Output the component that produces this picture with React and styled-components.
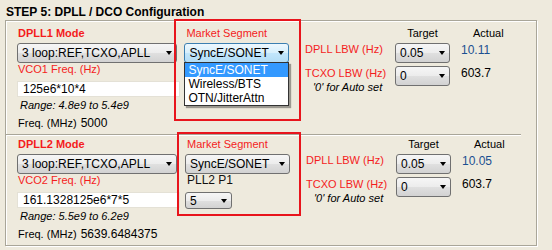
import React from 'react';
import styled, { createGlobalStyle } from 'styled-components';

const GlobalStyle = createGlobalStyle`
  html, body {
    margin: 0;
    padding: 0;
    background: #eeeadd;
  }
  body {
    font-family: "Liberation Sans", Arial, sans-serif;
    color: #000;
  }
`;

const Page = styled.div`
  width: 552px;
  height: 250px;
  box-sizing: border-box;
  padding: 5px 0 0 5px;
  overflow: hidden;
`;

const Title = styled.div`
  font-size: 12px;
  font-weight: bold;
  line-height: 14px;
  height: 14px;
  padding-left: 1px;
  margin-bottom: 1px;
`;

const Panel = styled.div`
  width: 532px;
  box-sizing: border-box;
  border: 1px solid #a9a699;
  box-shadow: 1px 1px 0 #fff, inset 1px 1px 0 #fff;
`;

const Section = styled.div`
  display: flex;
  padding: ${p => p.$top}px 0 4px 11px;
  margin-right: ${p => (p.$divider ? 15 : 0)}px;
  border-bottom: ${p => (p.$divider ? '1px solid #a9a699' : 'none')};
  box-shadow: ${p => (p.$divider ? '0 1px 0 #fff' : 'none')};
`;

const LeftCol = styled.div`
  width: 168px;
  display: flex;
  flex-direction: column;
`;

const MidCol = styled.div`
  position: relative;
  width: 121px;
  display: flex;
  flex-direction: column;
  align-items: flex-start;
`;

const RightGrid = styled.div`
  display: grid;
  grid-template-columns: 90px 66px 60px;
  grid-template-rows: 13px 20px auto;
  row-gap: 3px;
  align-items: start;
  & > :nth-child(n + 4) {
    margin-top: 0;
  }
`;

const ModeLabel = styled.div`
  color: #f41c1c;
  font-size: 11px;
  font-weight: bold;
  line-height: 13px;
  padding-left: 1px;
`;

const RedLabel = styled.div`
  color: #f41c1c;
  font-size: 11px;
  line-height: ${p => p.$lh || 13}px;
  padding-left: ${p => p.$pl || 0}px;
  margin-top: ${p => p.$mt || 0}px;
  white-space: nowrap;
`;

const Note = styled.div`
  font-size: 11px;
  font-style: italic;
  line-height: 14px;
  padding-left: ${p => p.$pl || 0}px;
  white-space: nowrap;
`;

const Select = styled.div`
  box-sizing: border-box;
  width: ${p => p.$w}px;
  height: ${p => p.$h || 20}px;
  margin-top: ${p => p.$mt || 0}px;
  display: flex;
  align-items: center;
  padding-left: 4px;
  border: 1px solid ${p => (p.$focus ? '#3c7fb1' : '#707070')};
  border-radius: 3px;
  background: ${p =>
    p.$focus
      ? 'linear-gradient(#eef8fe, #d6effc 50%, #c2e6fb 50%, #b3ddf6)'
      : 'linear-gradient(#f6f6f6, #ececec 50%, #e0e0e0 50%, #d2d2d2)'};
  font-size: 12px;
  white-space: nowrap;
`;

const Arrow = styled.span`
  margin-left: auto;
  margin-right: 4px;
  width: 0;
  height: 0;
  border-left: 3.5px solid transparent;
  border-right: 3.5px solid transparent;
  border-top: 4px solid #000;
`;

const TextInput = styled.div`
  box-sizing: border-box;
  width: 163px;
  height: 16px;
  margin-top: 5px;
  padding-left: 5px;
  background: #fff;
  border: 1px solid #e4e1d6;
  font-size: 12px;
  line-height: 14px;
`;

const Range = styled.div`
  font-size: 11px;
  font-style: italic;
  line-height: 13px;
  margin-top: 2px;
  padding-left: 3px;
`;

const FreqRow = styled.div`
  display: flex;
  align-items: baseline;
  gap: 4px;
  margin-top: 4px;
  padding-left: 1px;
  line-height: 14px;
  font-size: 11px;
`;

const FreqValue = styled.span`
  font-size: 12px;
`;

const PlainLabel = styled.div`
  font-size: 12px;
  line-height: 13px;
  padding-left: 2px;
  color: #111;
`;

const HeadCell = styled.div`
  font-size: 11px;
  line-height: 13px;
  text-align: ${p => p.$align || 'left'};
  padding-left: ${p => p.$pl || 0}px;
  width: ${p => p.$w || 'auto'};
`;

const Value = styled.div`
  font-size: 12px;
  line-height: 14px;
  margin-top: ${p => p.$mt}px;
  color: ${p => p.$color || '#000'};
`;

const Cell = styled.div`
  margin-top: ${p => p.$mt || 0}px;
`;

const List = styled.div`
  position: absolute;
  top: 35px;
  left: 0;
  width: 105px;
  box-sizing: border-box;
  border: 1px solid #333;
  background: #fff;
  box-shadow: 2px 2px 1px rgba(0, 0, 0, 0.35);
  z-index: 2;
`;

const Option = styled.div`
  height: 14px;
  line-height: 14px;
  font-size: 12px;
  padding-left: 3px;
  background: ${p => (p.$active ? '#3399ff' : 'transparent')};
  color: ${p => (p.$active ? '#fff' : '#000')};
`;

const Annotation = styled.div`
  position: absolute;
  left: ${p => p.$l}px;
  top: ${p => p.$t}px;
  width: ${p => p.$w}px;
  height: ${p => p.$h}px;
  box-sizing: border-box;
  border: 2px solid #e8141c;
  pointer-events: none;
  z-index: 3;
`;

const sections = [
  {
    n: 1,
    top: 6,
    divider: true,
    vco: '125e6*10*4',
    range: 'Range: 4.8e9 to 5.4e9',
    freq: '5000',
    open: true,
    lbw: '10.11',
    box: { l: -10, t: -8, w: 127, h: 102 },
  },
  {
    n: 2,
    top: 3,
    divider: false,
    vco: '161.1328125e6*7*5',
    range: 'Range: 5.5e9 to 6.2e9',
    freq: '5639.6484375',
    p1: true,
    lbw: '10.05',
    box: { l: -8, t: -6, w: 124, h: 84 },
  },
];

const DpllSection = ({ s }) => (
  <Section $top={s.top} $divider={s.divider}>
    <LeftCol>
      <ModeLabel>DPLL{s.n} Mode</ModeLabel>
      <Select $w={160} $mt={3}>
        3 loop:REF,TCXO,APLL
        <Arrow />
      </Select>
      <RedLabel $pl={1}>VCO{s.n} Freq. (Hz)</RedLabel>
      <TextInput>{s.vco}</TextInput>
      <Range>{s.range}</Range>
      <FreqRow>
        <span>Freq. (MHz)</span>
        <FreqValue>{s.freq}</FreqValue>
      </FreqRow>
    </LeftCol>

    <MidCol>
      <RedLabel $pl={2}>Market Segment</RedLabel>
      <Select $w={105} $mt={3} $focus={s.open}>
        SyncE/SONET
        <Arrow />
      </Select>
      {s.open && (
        <List>
          <Option $active>SyncE/SONET</Option>
          <Option>Wireless/BTS</Option>
          <Option>OTN/JitterAttn</Option>
        </List>
      )}
      {s.p1 && (
        <>
          <PlainLabel>PLL2 P1</PlainLabel>
          <Select $w={47} $h={17} $mt={5}>
            5
            <Arrow />
          </Select>
        </>
      )}
      <Annotation $l={s.box.l} $t={s.box.t} $w={s.box.w} $h={s.box.h} />
    </MidCol>

    <RightGrid>
      <div />
      <HeadCell $align="center" $w="55px">Target</HeadCell>
      <HeadCell $pl={12}>Actual</HeadCell>

      <RedLabel $mt={1}>DPLL LBW (Hz)</RedLabel>
      <Select $w={55}>
        0.05
        <Arrow />
      </Select>
      <Value $mt={2} $color="#1b4f91">{s.lbw}</Value>

      <Cell $mt={-1}>
        <RedLabel $lh={14}>TCXO LBW (Hz)</RedLabel>
        <Note $pl={8}>'0' for Auto set</Note>
      </Cell>
      <Cell $mt={6}>
        <Select $w={55}>
          0
          <Arrow />
        </Select>
      </Cell>
      <Value $mt={8}>603.7</Value>
    </RightGrid>
  </Section>
);

export default function App() {
  return (
    <>
      <GlobalStyle />
      <Page>
        <Title>STEP 5: DPLL / DCO Configuration</Title>
        <Panel>
          {sections.map(s => (
            <DpllSection key={s.n} s={s} />
          ))}
        </Panel>
      </Page>
    </>
  );
}
